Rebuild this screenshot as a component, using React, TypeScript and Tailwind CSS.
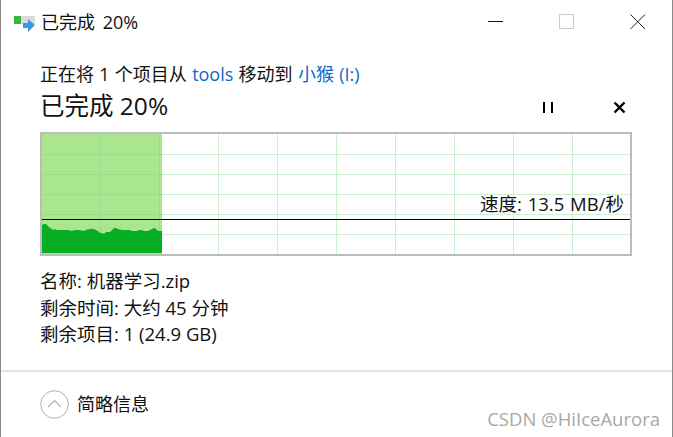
const font = { fontFamily: '"Open Sans", "Noto Sans CJK SC", sans-serif' };

const verticals = [58, 117, 176, 235, 294, 353, 412, 471, 530];
const horizontals = [20, 40, 60, 80, 100];

// transfer speed samples, drawn as an area along the bottom of the graph
const speedArea =
  "M0 119 L0 91 L2 90 L4 90 L6 92 L8 94 L10 95 L12 96 L13 95 L15 96 L20 96 L27 96 L29 97 L33 96 L38 96 L41 97 L44 96 L48 95 L52 95 L54 96 L56 97 L58 99 L60 99 L62 100 L64 98 L68 98 L70 96 L72 94 L74 94 L76 95 L80 96 L88 96 L90 97 L94 97 L98 96 L100 96 L102 97 L106 97 L110 95 L112 94 L114 95 L116 97 L120 97 L120 119 Z";

function Graph() {
  return (
    <div className="relative mt-[8px] h-[124px] w-[592px] border-2 border-[#bcbcbc] bg-white">
      <svg width="588" height="120" className="block">
        {verticals.map((x) => (
          <rect key={x} x={x} y="0" width="1" height="120" fill="#cdf0d0" />
        ))}
        {horizontals.map((y) => (
          <rect key={y} x="0" y={y} width="588" height="1" fill="#cdf0d0" />
        ))}
        <rect x="0" y="0" width="120" height="120" fill="#a9e68f" />
        {verticals.slice(0, 2).map((x) => (
          <rect key={x} x={x} y="0" width="1" height="120" fill="#97de86" />
        ))}
        {horizontals.map((y) => (
          <rect key={y} x="0" y={y} width="120" height="1" fill="#97de86" />
        ))}
        <path d={speedArea} fill="#06ae24" />
        <rect x="0" y="85" width="588" height="1" fill="#000000" />
      </svg>
      <span className="absolute right-[6px] top-[58px] text-[18.5px] leading-[24px] text-[#111] [word-spacing:1px]">速度: 13.5 MB/秒</span>
    </div>
  );
}

export default function App() {
  return (
    <div style={font} className="relative flex h-[437px] w-[673px] flex-col overflow-hidden border-x border-x-[#8a8a8a] bg-white text-[#111]">
      {/* Title bar */}
      <div className="flex h-[44px] shrink-0 items-center pl-[12px]">
        <svg width="24" height="18" viewBox="0 0 24 18" className="mt-[3px] shrink-0">
          <rect x="1" y="1" width="21" height="8" fill="#dcdcdc" />
          <rect x="1" y="1" width="7" height="8" fill="#37b63a" />
          <path d="M11 10h5V6l7 6-7 7v-4h-5z" fill="#3d96e6" transform="translate(-1 -2)" />
        </svg>
        <span className="ml-[4px] text-[18px] leading-[24px] [word-spacing:3px]">已完成 20%</span>
        <div className="ml-auto flex items-center gap-[55px] pr-[26px]">
          <svg width="16" height="16" viewBox="0 0 16 16">
            <rect x="0" y="7" width="15" height="1" fill="#111" />
          </svg>
          <svg width="16" height="16" viewBox="0 0 16 16">
            <rect x="0.5" y="0.5" width="14" height="14" fill="none" stroke="#cccccc" />
          </svg>
          <svg width="16" height="16" viewBox="0 0 16 16">
            <path d="M0.5 0.5L15 15M15 0.5L0.5 15" stroke="#222" fill="none" />
          </svg>
        </div>
      </div>

      {/* Progress */}
      <div className="flex flex-col pl-[39px]">
        <div className="mt-[18px] text-[18px] leading-[24px] [word-spacing:0.6px]">
          正在将 1 个项目从 <span className="text-[#0d6bc4]">tools</span> 移动到 <span className="text-[#0d6bc4]">小猴 (I:)</span>
        </div>
        <div className="mt-[1px] flex h-[37px] w-[592px] items-center">
          <span className="text-[24.5px] leading-[29px]">已完成 20%</span>
          <div className="ml-auto flex items-center gap-[59px] pr-[6px] pt-[4px]">
            <svg width="12" height="12" viewBox="0 0 12 12">
              <rect x="1" y="0" width="2" height="11" fill="#000" />
              <rect x="9" y="0" width="2" height="11" fill="#000" />
            </svg>
            <svg width="13" height="13" viewBox="0 0 13 13">
              <path d="M1.5 1.5L11.5 11.5M11.5 1.5L1.5 11.5" stroke="#000" strokeWidth="2.4" fill="none" />
            </svg>
          </div>
        </div>
        <Graph />

        {/* Details */}
        <div className="mt-[12px] flex flex-col text-[18.5px] leading-[26.5px]">
          <div>名称: 机器学习.zip</div>
          <div>剩余时间: 大约 45 分钟</div>
          <div>剩余项目: 1 (24.9 GB)</div>
        </div>
      </div>

      {/* Footer */}
      <div className="mt-[22px] flex flex-1 items-center border-t-2 border-t-[#e3e3e3] pl-[39px]">
        <svg width="29" height="29" viewBox="0 0 29 29" className="shrink-0">
          <circle cx="14.5" cy="14.5" r="13.8" fill="none" stroke="#b0b0b0" />
          <path d="M8 17l6.5-6.5L21 17" fill="none" stroke="#b0b0b0" strokeWidth="1.2" />
        </svg>
        <span className="ml-[8px] text-[18px] leading-[24px]">简略信息</span>
      </div>

      <span className="absolute right-[12px] top-[407px] text-[18.5px] leading-[24px] text-[#a8a8a8]">CSDN @HiIceAurora</span>
    </div>
  );
}
